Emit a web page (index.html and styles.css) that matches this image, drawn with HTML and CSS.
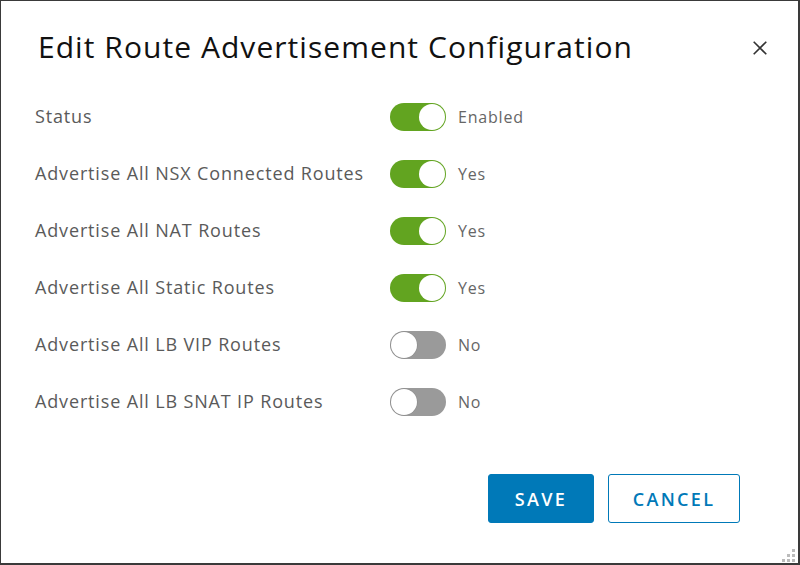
FILE: index.html
```html
<!DOCTYPE html>
<html>
<head>
<meta charset="utf-8">
<link rel="stylesheet" href="styles.css">
</head>
<body>
<div class="dialog">
  <div class="header">
    <h1 class="title">Edit Route Advertisement Configuration</h1>
    <button class="close" aria-label="Close">
      <svg width="14" height="14" viewBox="0 0 14 14"><path d="M0.7 0.7 L13.3 13.3 M13.3 0.7 L0.7 13.3" stroke="#333" stroke-width="1.6" fill="none"/></svg>
    </button>
  </div>
  <div class="rows">
    <div class="row"><span class="label">Status</span><span class="toggle on"><span class="knob"></span></span><span class="value">Enabled</span></div>
    <div class="row"><span class="label">Advertise All NSX Connected Routes</span><span class="toggle on"><span class="knob"></span></span><span class="value">Yes</span></div>
    <div class="row"><span class="label">Advertise All NAT Routes</span><span class="toggle on"><span class="knob"></span></span><span class="value">Yes</span></div>
    <div class="row"><span class="label">Advertise All Static Routes</span><span class="toggle on"><span class="knob"></span></span><span class="value">Yes</span></div>
    <div class="row"><span class="label">Advertise All LB VIP Routes</span><span class="toggle off"><span class="knob"></span></span><span class="value">No</span></div>
    <div class="row"><span class="label">Advertise All LB SNAT IP Routes</span><span class="toggle off"><span class="knob"></span></span><span class="value">No</span></div>
  </div>
  <div class="footer">
    <button class="btn primary">SAVE</button>
    <button class="btn outline">CANCEL</button>
  </div>
  <svg class="grip" width="14" height="14" viewBox="0 0 14 14">
    <rect x="10" y="1" width="3" height="3" fill="#bbb"/>
    <rect x="5" y="6" width="3" height="3" fill="#bbb"/>
    <rect x="10" y="6" width="3" height="3" fill="#bbb"/>
    <rect x="0" y="11" width="3" height="3" fill="#bbb"/>
    <rect x="5" y="11" width="3" height="3" fill="#bbb"/>
    <rect x="10" y="11" width="3" height="3" fill="#bbb"/>
  </svg>
</div>
</body>
</html>
```
FILE: styles.css
```css
* { box-sizing: border-box; }
html, body { margin: 0; padding: 0; background: #fff; }
body { font-family: "Open Sans", Lato, sans-serif; }
.dialog {
  position: relative;
  width: 800px;
  height: 565px;
  border: 1px solid #3a3a3a;
  border-right-width: 2px;
  border-bottom-width: 2px;
  background: #fff;
  display: flex;
  flex-direction: column;
}
.header {
  display: flex;
  justify-content: space-between;
  align-items: flex-start;
  padding: 26px 31px 0 37px;
  height: 87px;
}
.title {
  margin: 0;
  font-weight: 400;
  font-size: 30px;
  line-height: 40px;
  color: #111;
  letter-spacing: 1.05px;
}
.close {
  border: 0;
  background: none;
  padding: 0;
  margin-top: 14px;
  width: 14px;
  height: 14px;
  cursor: pointer;
}
.close svg { display: block; }
.rows { display: flex; flex-direction: column; padding-left: 34px; }
.row {
  display: flex;
  align-items: center;
  height: 57px;
}
.label {
  width: 355px;
  font-size: 18px;
  color: #5a5a5a;
  letter-spacing: 0.85px;
  margin-top: -1px;
}
.toggle {
  position: relative;
  width: 56px;
  height: 28px;
  border-radius: 14px;
}
.toggle.on { background: #62a420; }
.toggle.off { background: #9a9a9a; }
.knob {
  position: absolute;
  top: 1px;
  width: 26px;
  height: 26px;
  border-radius: 50%;
  background: #fff;
}
.toggle.on .knob { right: 1px; }
.toggle.off .knob { left: 1px; box-shadow: 0 0 0 0.5px #888; }
.value {
  margin-left: 12px;
  font-size: 16px;
  color: #666;
  letter-spacing: 0.8px;
}
.footer {
  display: flex;
  justify-content: flex-end;
  gap: 14px;
  padding-right: 58px;
  margin-top: 44px;
}
.btn {
  height: 49px;
  border-radius: 3px;
  font-family: "Open Sans", Lato, sans-serif;
  font-size: 18px;
  font-weight: 600;
  letter-spacing: 2.3px;
  cursor: pointer;
  padding: 0;
}
.primary {
  width: 106px;
  background: #0079b8;
  border: 1px solid #0079b8;
  color: #fff;
}
.outline {
  width: 132px;
  background: #fff;
  border: 1px solid #0079b8;
  color: #0079b8;
}
.grip { position: absolute; right: 2px; bottom: 1px; }
```
